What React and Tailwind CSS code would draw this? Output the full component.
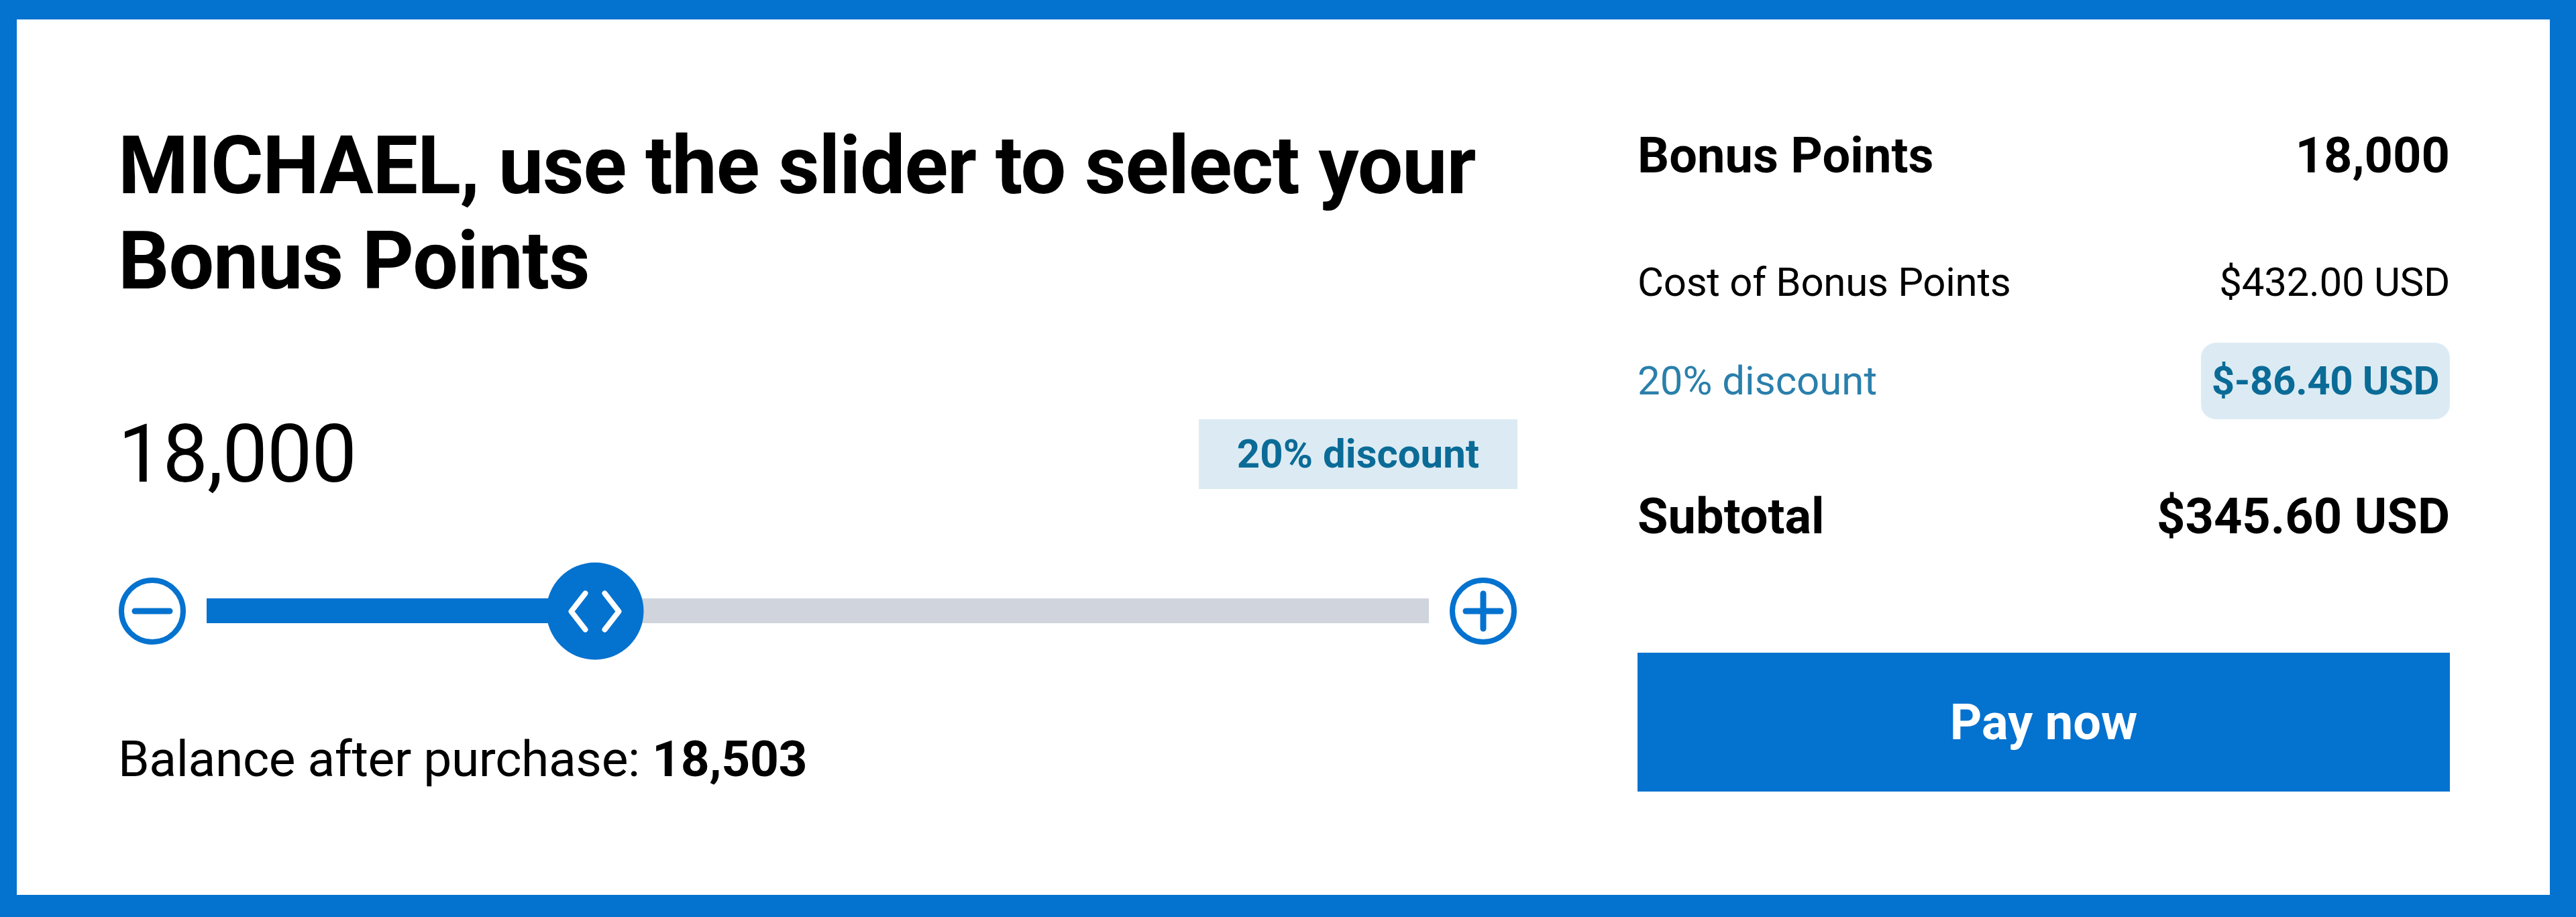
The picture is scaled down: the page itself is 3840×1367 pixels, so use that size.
import React from "react";

const font = { fontFamily: "Roboto, 'Noto Sans', sans-serif" };

const RoundButton = ({ plus }) => (
  <button className="shrink-0 h-[102px] w-[102px]">
    <svg viewBox="0 0 102 102" className="h-full w-full">
      <circle cx="51" cy="51" r="46" fill="none" stroke="#0472cf" strokeWidth="8" />
      <line x1="25" y1="51" x2="77" y2="51" stroke="#0472cf" strokeWidth="9" strokeLinecap="round" />
      {plus && <line x1="51" y1="25" x2="51" y2="77" stroke="#0472cf" strokeWidth="9" strokeLinecap="round" />}
    </svg>
  </button>
);

const Slider = ({ percent }) => (
  <div className="flex h-[145px] items-center gap-[30px]">
    <RoundButton />
    <div className="relative h-[37px] flex-1 bg-[#d0d5dd]">
      <div className="h-full bg-[#0472cf]" style={{ width: `${percent}%` }} />
      <div
        className="absolute top-1/2 h-[145px] w-[145px] -translate-x-1/2 -translate-y-1/2 rounded-full bg-[#0472cf]"
        style={{ left: `${percent}%` }}
      >
        <svg viewBox="0 0 145 145" className="h-full w-full">
          <path d="M58 46 L37 73 L58 100" fill="none" stroke="#fff" strokeWidth="8" strokeLinecap="round" strokeLinejoin="round" />
          <path d="M87 46 L108 73 L87 100" fill="none" stroke="#fff" strokeWidth="8" strokeLinecap="round" strokeLinejoin="round" />
        </svg>
      </div>
    </div>
    <RoundButton plus />
  </div>
);

export default function App() {
  return (
    <div
      className="h-[1367px] w-full border-t-[29px] border-r-[39px] border-b-[33px] border-l-[25px] border-[#0472cf] bg-white text-black"
      style={font}
    >
      <div className="flex h-full justify-between pt-[147px] pr-[149px] pb-[152px] pl-[151px]">
        {/* points picker */}
        <div className="flex w-[2086px] flex-col">
          <h1 className="text-[120px] font-bold leading-[142px] tracking-[-1.1px]">
            MICHAEL, use the slider to select your
            <br />
            Bonus Points
          </h1>

          <div className="mt-[157px] flex items-center justify-between">
            <span className="text-[120px] leading-[120px] tracking-[-1px]">18,000</span>
            <span className="flex h-[104px] w-[475px] items-center justify-center bg-[#dcebf3] text-[60px] font-bold text-[#0b6b97]">
              20% discount
            </span>
          </div>

          <div className="mt-[101px]">
            <Slider percent={31.8} />
          </div>

          <p className="mt-[103px] text-[75px] leading-[90px] tracking-[-0.4px]">
            Balance after purchase: <span className="font-bold">18,503</span>
          </p>
        </div>

        {/* order summary */}
        <div className="flex w-[1211px] flex-col">
          <div className="mt-[13px] flex justify-between text-[74px] font-bold leading-[86px]">
            <span>Bonus Points</span>
            <span>18,000</span>
          </div>

          <div className="mt-[110px] flex justify-between text-[60px] leading-[72px] tracking-[-0.3px]">
            <span>Cost of Bonus Points</span>
            <span>$432.00 USD</span>
          </div>

          <div className="mt-[54px] flex items-center justify-between text-[60px] leading-[72px]">
            <span className="text-[#2a7fab]">20% discount</span>
            <span className="rounded-[22px] bg-[#dcebf3] px-[16px] py-[21px] font-bold tracking-[-0.4px] text-[#0b6b97]">
              $-86.40 USD
            </span>
          </div>

          <div className="mt-[102px] flex justify-between text-[74px] font-bold leading-[86px]">
            <span>Subtotal</span>
            <span>$345.60 USD</span>
          </div>

          <button className="mt-[160px] h-[207px] w-full bg-[#0472cf] text-[74px] font-bold text-white">
            Pay now
          </button>
        </div>
      </div>
    </div>
  );
}
